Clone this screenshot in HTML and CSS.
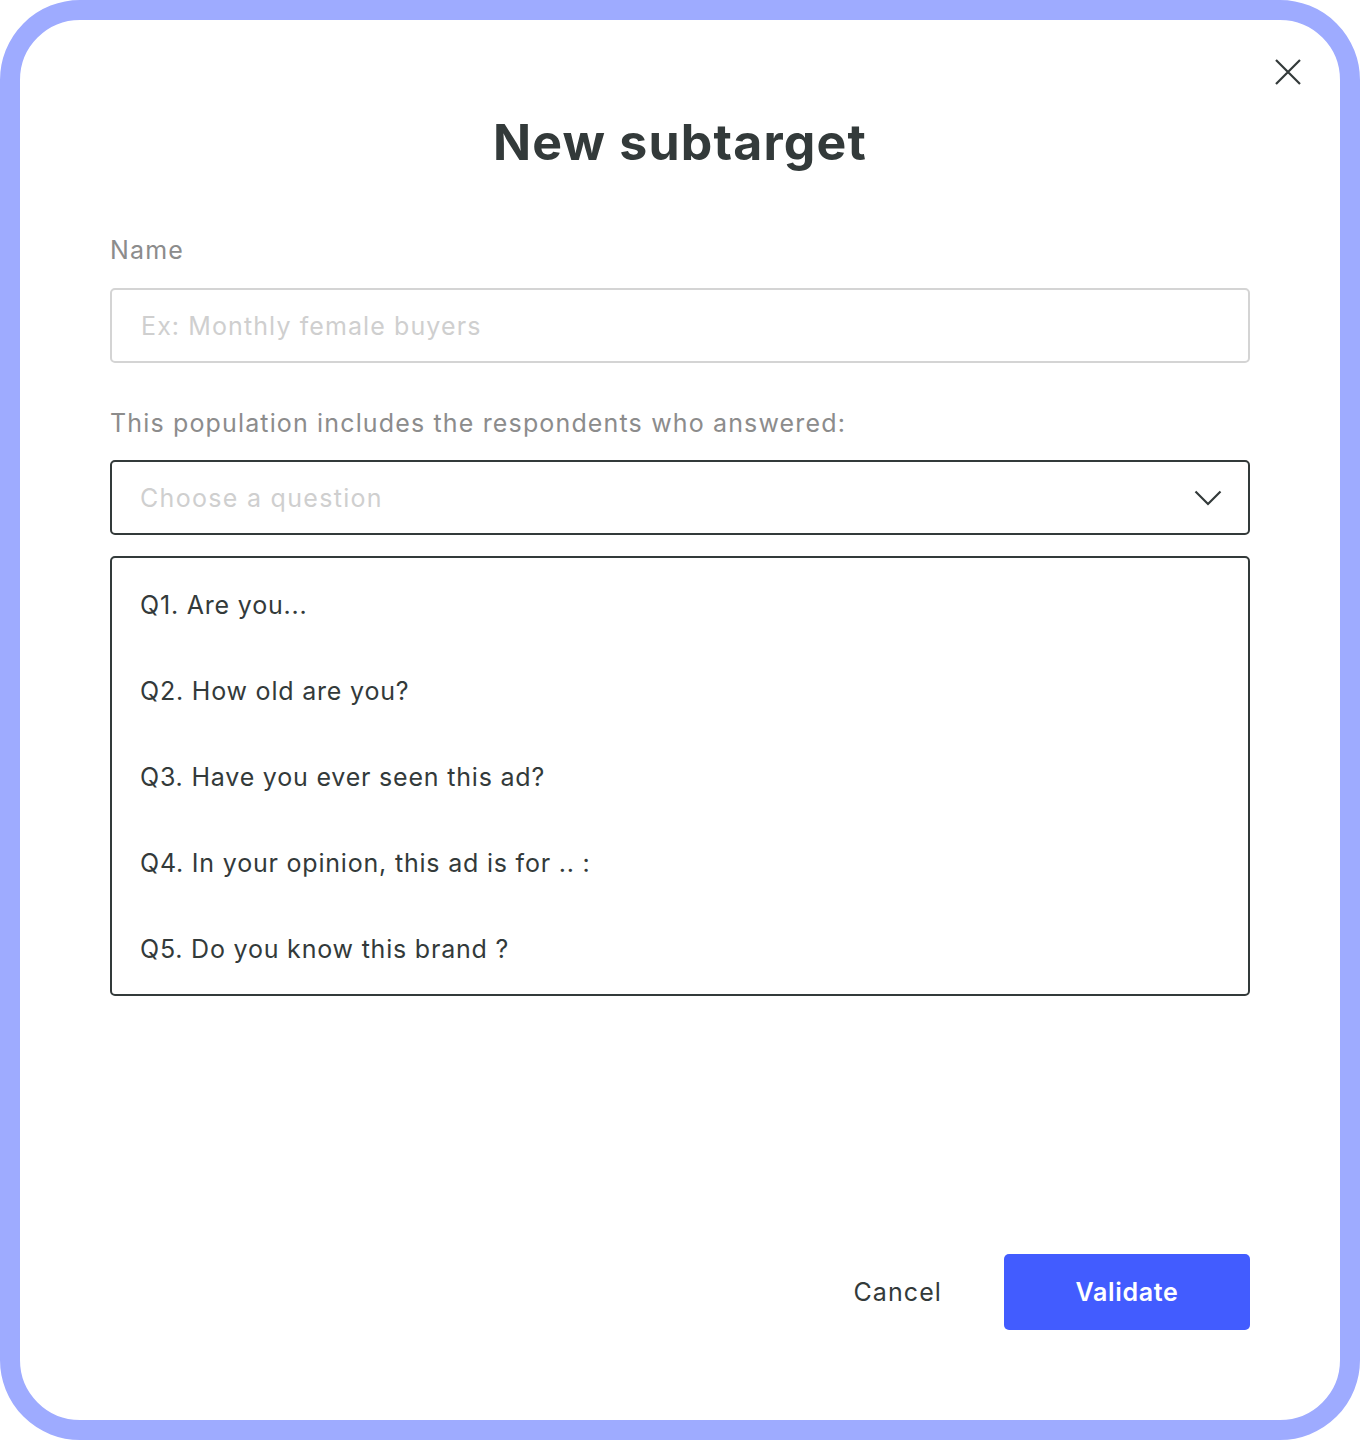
FILE: index.html
```html
<!DOCTYPE html>
<html lang="en">
  <head>
    <meta charset="UTF-8" />
    <title>New subtarget</title>
    <link rel="stylesheet" href="styles.css">
  </head>
  <body>
    <section class="modal">
      <button class="close" aria-label="Close">
        <svg width="28" height="28" viewBox="0 0 28 28">
          <path d="M2 2 L26 26 M26 2 L2 26" stroke="#333a3a" stroke-width="2.2" fill="none" />
        </svg>
      </button>

      <h1>New subtarget</h1>

      <form class="form">
        <label class="label" for="name">Name</label>
        <input class="field" type="text" id="name" name="name" placeholder="Ex: Monthly female buyers" />

        <p class="label">This population includes the respondents who answered:</p>

        <div class="select">
          <span class="select-text">Choose a question</span>
          <svg width="28" height="16" viewBox="0 0 28 16">
            <path d="M1.5 1.5 L14 14 L26.5 1.5" stroke="#333a3a" stroke-width="2.2" fill="none" />
          </svg>
        </div>

        <ul class="options">
          <li>Q1. Are you...</li>
          <li>Q2. How old are you?</li>
          <li>Q3. Have you ever seen this ad?</li>
          <li>Q4. In your opinion, this ad is for .. :</li>
          <li>Q5. Do you know this brand ?</li>
        </ul>
      </form>

      <div class="actions">
        <button class="btn-cancel" type="button">Cancel</button>
        <button class="btn-validate" type="button">Validate</button>
      </div>
    </section>
  </body>
</html>
```

FILE: styles.css
```css
html,
body {
  margin: 0;
  padding: 0;
  background: #fff;
}

body {
  font-family: Inter, 'Noto Sans', sans-serif;
  color: #333a3a;
}

.modal {
  position: relative;
  box-sizing: border-box;
  width: 1360px;
  height: 1440px;
  border: 20px solid #9eabff;
  border-radius: 80px;
  background: #fff;
  padding: 88px 90px 90px;
  display: flex;
  flex-direction: column;
}

.close {
  position: absolute;
  top: 38px;
  right: 38px;
  border: none;
  background: none;
  padding: 0;
  cursor: pointer;
  line-height: 0;
}

h1 {
  margin: 0;
  text-align: center;
  font-size: 50px;
  line-height: 68px;
  font-weight: 700;
  letter-spacing: 1.2px;
  color: #333a3a;
}

.form {
  display: flex;
  flex-direction: column;
  margin-top: 58px;
}

.label {
  margin: 0;
  font-size: 25px;
  line-height: 32px;
  letter-spacing: 1.15px;
  color: #8c8c8c;
  font-weight: 400;
}

.field {
  box-sizing: border-box;
  margin: 22px 0 44px;
  height: 75px;
  border: 2px solid #d4d4d4;
  border-radius: 5px;
  padding: 0 29px;
  font-family: inherit;
  font-size: 25px;
  letter-spacing: 1.1px;
  color: #333a3a;
  outline: none;
}

.field::placeholder {
  color: #cfcfcf;
}

.select {
  box-sizing: border-box;
  margin-top: 21px;
  height: 75px;
  border: 2px solid #333a3a;
  border-radius: 5px;
  padding: 0 26px 0 28px;
  display: flex;
  align-items: center;
  justify-content: space-between;
}

.select-text {
  font-size: 25px;
  letter-spacing: 1.3px;
  color: #cfcfcf;
}

.options {
  list-style: none;
  margin: 21px 0 0;
  padding: 4px 28px 2px;
  border: 2px solid #333a3a;
  border-radius: 5px;
  display: flex;
  flex-direction: column;
}

.options li {
  font-size: 25px;
  line-height: 86px;
  letter-spacing: 0.8px;
  color: #333a3a;
}

.actions {
  margin-top: auto;
  display: flex;
  justify-content: flex-end;
  align-items: center;
  gap: 62px;
}

.btn-cancel {
  border: none;
  background: none;
  padding: 0;
  font-family: inherit;
  font-size: 25px;
  letter-spacing: 1.1px;
  color: #333a3a;
  cursor: pointer;
}

.btn-validate {
  width: 246px;
  height: 76px;
  border: none;
  border-radius: 5px;
  background: #425cff;
  color: #fff;
  font-family: inherit;
  font-size: 25px;
  font-weight: 600;
  letter-spacing: 0.7px;
  cursor: pointer;
}
```
